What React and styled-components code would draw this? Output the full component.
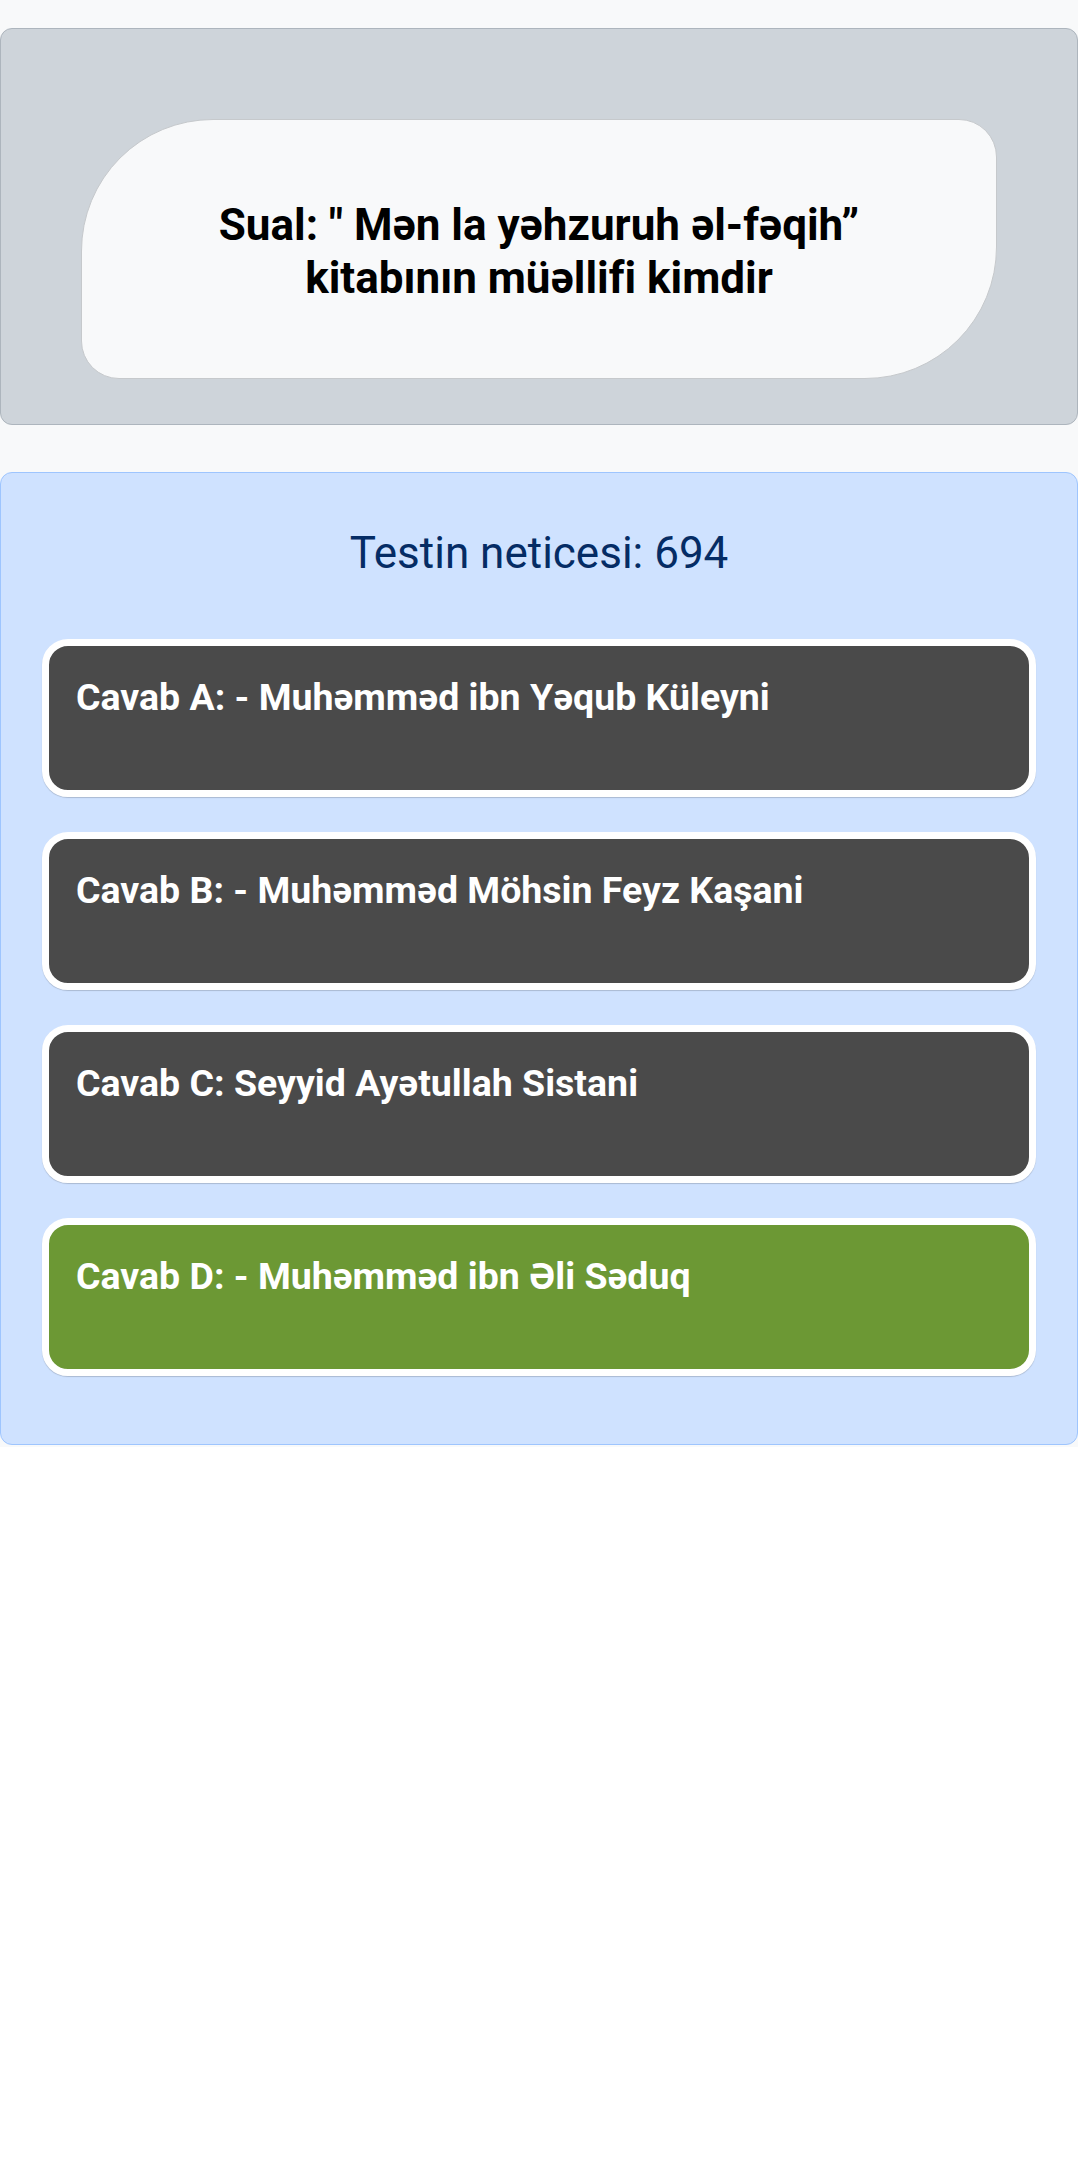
import React from "react";
import styled, { createGlobalStyle } from "styled-components";

const GlobalStyle = createGlobalStyle`
  body {
    margin: 0;
    background: #fff;
    font-family: Roboto, "Noto Sans", "Liberation Sans", sans-serif;
    font-variant-ligatures: none;
  }
`;

const Page = styled.div`
  background: #f8f9fa;
  padding: 28px 0 2px;
`;

const QuestionCard = styled.div`
  background: #ced4da;
  border: 1px solid #adb5bd;
  border-radius: 12px;
  padding: 90px 80px 45px;
`;

const QuestionBubble = styled.div`
  display: flex;
  align-items: center;
  justify-content: center;
  box-sizing: border-box;
  height: 260px;
  padding: 6px 90px 0;
  background: #f8f9fa;
  border: 1px solid #c6c9cc;
  border-radius: 132px 38px 132px 38px;
`;

const QuestionText = styled.h2`
  margin: 0;
  font-size: 44px;
  line-height: 53px;
  font-weight: 700;
  color: #000;
  text-align: center;
`;

const ResultPanel = styled.div`
  margin-top: 47px;
  background: #cfe2ff;
  border: 1px solid #9ec5fe;
  border-radius: 12px;
  padding: 54px 41px 68px;
`;

const ResultTitle = styled.h3`
  margin: 0 0 59px;
  font-size: 44px;
  line-height: 53px;
  font-weight: 400;
  color: #052c65;
  text-align: center;
`;

const AnswerList = styled.div`
  display: flex;
  flex-direction: column;
  gap: 35px;
`;

const Answer = styled.div`
  box-sizing: border-box;
  height: 158px;
  padding: 29px 27px;
  border: 7px solid #fff;
  border-radius: 26px;
  box-shadow: 0 1px 1px rgba(0, 0, 0, 0.18);
  background: ${(props) => (props.$correct ? "#6c9834" : "#4a4a4a")};
  color: #fff;
  font-size: 37.5px;
  line-height: 44px;
  font-weight: 700;
`;

const answers = [
  { id: "A", text: "Cavab A: - Muhəmməd ibn Yəqub Küleyni" },
  { id: "B", text: "Cavab B: - Muhəmməd Möhsin Feyz Kaşani" },
  { id: "C", text: "Cavab C: Seyyid Ayətullah Sistani" },
  { id: "D", text: "Cavab D: - Muhəmməd ibn Əli Səduq", correct: true },
];

export default function App() {
  return (
    <>
      <GlobalStyle />
      <Page>
        <QuestionCard>
          <QuestionBubble>
            <QuestionText>
              Sual: " Mən la yəhzuruh əl-fəqih” kitabının müəllifi kimdir
            </QuestionText>
          </QuestionBubble>
        </QuestionCard>

        <ResultPanel>
          <ResultTitle>Testin neticesi: 694</ResultTitle>
          <AnswerList>
            {answers.map((a) => (
              <Answer key={a.id} $correct={a.correct}>
                {a.text}
              </Answer>
            ))}
          </AnswerList>
        </ResultPanel>
      </Page>
    </>
  );
}
